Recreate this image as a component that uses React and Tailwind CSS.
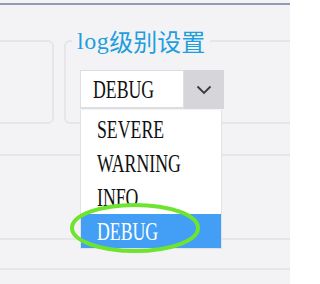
import React from "react";

const levels = ["SEVERE", "WARNING", "INFO", "DEBUG"];

function Label({ children }) {
  return (
    <span className="inline-block origin-left scale-x-[0.71] whitespace-nowrap">{children}</span>
  );
}

export default function App() {
  const current = "DEBUG";

  return (
    <div className="relative w-[290px] h-[284px] overflow-hidden bg-[#f3f3f6] font-['Liberation_Serif','Noto_Sans_CJK_SC',serif]">
      {/* top rule */}
      <div className="pt-[3px]">
        <div className="h-[2px] bg-[#8d9cb7]" />
      </div>

      {/* fieldsets row */}
      <div className="mt-[35px] flex items-start gap-[10px]">
        <div className="-ml-[26px] h-[84px] w-[80px] shrink-0 rounded-[6px] border-2 border-[#e6e6ea]" />
        <div className="relative h-[84px] w-[260px] shrink-0 rounded-[6px] border-2 border-[#e6e6ea] pt-[28px] pl-[14px]">
          <div className="absolute -top-[14px] left-[6px] flex h-[26px] items-center bg-[#f3f3f6] px-[5px] text-[#1f9edd]">
            <span className="text-[24px] leading-[26px] tracking-[0.5px]">log</span>
            <span className="text-[24px] leading-[26px] font-['Noto_Sans_CJK_SC',sans-serif]">级别设置</span>
          </div>
          <div className="flex h-[39px] w-[144px]">
            <div className="flex flex-1 items-center border border-b-[2px] border-[#dedee2] bg-white pl-[12px] text-[25px] leading-none text-[#111]">
              <Label>{current}</Label>
            </div>
            <div className="flex w-[40px] items-center justify-center bg-[#d6d6da]">
              <svg width="16" height="10" viewBox="0 0 16 10">
                <path d="M1.5 1.5 L8 8 L14.5 1.5" fill="none" stroke="#3a3a3a" strokeWidth="1.8" />
              </svg>
            </div>
          </div>
        </div>
      </div>

      {/* table rows */}
      <div className="mt-[30px] h-[84px] border-t-2 border-[#e6e6ea]" />
      <div className="h-[30px] border-t-2 border-[#e6e6ea]" />
      <div className="h-[30px] border-t-2 border-[#e6e6ea]" />

      {/* open dropdown */}
      <ul className="absolute left-[80px] top-[110px] w-[142px] border-x border-b border-[#e2e2e6] bg-white pt-[2px] text-[25px] leading-none">
        {levels.map((l) => (
          <li
            key={l}
            className={`flex h-[34px] items-center pl-[16px] ${
              l === current ? "bg-[#429ff5] text-white" : "text-[#111]"
            }`}
          >
            <Label>{l}</Label>
          </li>
        ))}
      </ul>

      {/* highlight ring */}
      <svg className="absolute left-[67px] top-[201px]" width="136" height="54" viewBox="0 0 136 54">
        <ellipse cx="68" cy="27" rx="63" ry="23" fill="none" stroke="#6fe42e" strokeWidth="4" />
      </svg>
    </div>
  );
}
